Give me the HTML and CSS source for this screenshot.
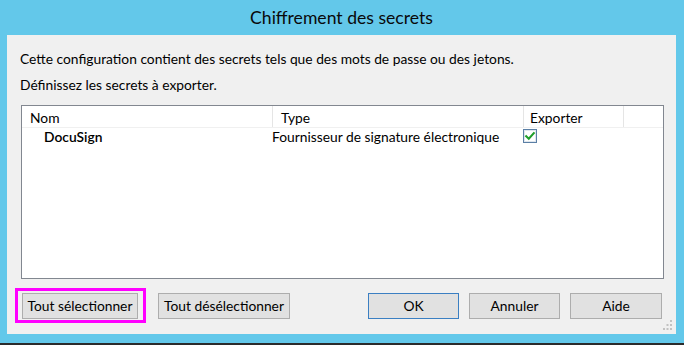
FILE: index.html
```html
<!DOCTYPE html>
<html lang="fr">
<head>
<meta charset="utf-8">
<title>Chiffrement des secrets</title>
<link rel="stylesheet" href="styles.css">
</head>
<body>
<div class="screen">
  <div class="window">
    <div class="titlebar">Chiffrement des secrets</div>
    <div class="panel">
      <p class="intro">Cette configuration contient des secrets tels que des mots de passe ou des jetons.</p>
      <p class="intro second">Définissez les secrets à exporter.</p>
      <div class="listview">
        <div class="lv-header">
          <div class="col col-name">Nom</div>
          <div class="col col-type">Type</div>
          <div class="col col-export">Exporter</div>
          <div class="col col-fill"></div>
        </div>
        <div class="lv-row">
          <div class="cell cell-name">DocuSign</div>
          <div class="cell cell-type">Fournisseur de signature électronique</div>
          <div class="cell cell-export">
            <svg class="checkbox" width="14" height="14" viewBox="0 0 14 14">
              <rect x="0.5" y="0.5" width="13" height="13" fill="#ffffff" stroke="#5b7fa5"/>
              <rect x="1.5" y="1.5" width="11" height="11" fill="none" stroke="#dfe6ee"/>
              <path d="M3.2 7.2 L5.8 9.8 L10.8 4.2" fill="none" stroke="#1f9e2a" stroke-width="2.1" stroke-linecap="square"/>
            </svg>
          </div>
        </div>
      </div>
      <div class="buttons">
        <div class="btn-group left">
          <span class="marked">
            <button class="btn wide1">Tout sélectionner</button>
            <span class="highlight"></span>
          </span>
          <button class="btn wide2">Tout désélectionner</button>
        </div>
        <div class="btn-group right">
          <button class="btn std default">OK</button>
          <button class="btn std">Annuler</button>
          <button class="btn std last">Aide</button>
        </div>
      </div>
      <svg class="grip" width="10" height="11" viewBox="0 0 10 11">
        <rect x="7" y="0" width="2" height="2" fill="#c2c2c2"/>
        <rect x="3.5" y="4" width="2" height="2" fill="#c2c2c2"/>
        <rect x="7" y="4" width="2" height="2" fill="#c2c2c2"/>
        <rect x="0" y="8" width="2" height="2" fill="#c2c2c2"/>
        <rect x="3.5" y="8" width="2" height="2" fill="#c2c2c2"/>
        <rect x="7" y="8" width="2" height="2" fill="#c2c2c2"/>
      </svg>
    </div>
  </div>
  <div class="taskline"></div>
</div>
</body>
</html>
```
FILE: styles.css
```css
* { box-sizing: border-box; }

html, body {
  margin: 0;
  padding: 0;
  background: #2b2b2b;
}

body {
  font-family: "Lato", "Noto Sans", sans-serif;
  font-size: 13.8px;
  color: #000000;
}

.screen {
  width: 684px;
  height: 345px;
  overflow: hidden;
}

.window {
  height: 343px;
  background: #63c8ea;
  padding: 0 8px 9px 7px;
}

.titlebar {
  height: 35px;
  line-height: 35px;
  text-align: center;
  font-size: 17.6px;
  color: #0a0a0a;
}

.panel {
  position: relative;
  width: 669px;
  height: 299px;
  background: #f0f0f0;
  padding: 16px 12px 15px 14px;
}

.intro {
  margin: 0 0 0 -1px;
  height: 16px;
  line-height: 16px;
  white-space: nowrap;
}

.intro.second {
  margin-top: 10px;
}

.listview {
  margin-top: 12px;
  width: 643px;
  height: 174px;
  border: 1px solid #828790;
  background: #ffffff;
}

.lv-header {
  display: flex;
  height: 22px;
  border-bottom: 1px solid #f0f0f0;
}

.col {
  height: 21px;
  padding-top: 2px;
  line-height: 19px;
  border-right: 1px solid #e5e5e5;
  white-space: nowrap;
}

.col-name { width: 251px; padding-left: 8px; }
.col-type { width: 251px; padding-left: 8px; }
.col-export { width: 100px; padding-left: 6px; }
.col-fill { flex: 1; border-right: none; }

.lv-row {
  display: flex;
  height: 18px;
  line-height: 18px;
}

.cell { white-space: nowrap; }
.cell-name { width: 250px; padding-left: 22px; font-weight: 600; }
.cell-type { width: 251px; }
.cell-export { width: 100px; padding-top: 1px; }

.checkbox { display: block; }

.buttons {
  margin-top: 14px;
  display: flex;
  justify-content: space-between;
  padding: 0 2px 0 1px;
}

.btn-group {
  display: flex;
  gap: 20px;
}

.btn-group.right { gap: 10px; }

.btn {
  height: 26px;
  margin: 0;
  padding: 0;
  font-family: "Lato", "Noto Sans", sans-serif;
  font-size: 13.8px;
  line-height: 24px;
  color: #000000;
  background: #e1e1e1;
  border: 1px solid #adadad;
  border-radius: 0;
  text-align: center;
}

.btn.wide1 { width: 116px; display: block; }
.btn.wide2 { width: 132px; }
.btn.std { width: 91px; }
.btn.std.last { width: 92px; }
.btn.default { border-color: #3b7fc2; }

.marked {
  position: relative;
  display: block;
}

.highlight {
  position: absolute;
  left: -7px;
  top: -5px;
  width: 131px;
  height: 35px;
  border: 3px solid #ff00ff;
  pointer-events: none;
}

.grip {
  position: absolute;
  right: 3px;
  bottom: 3px;
}

.taskline {
  height: 2px;
  background: #2b2b2b;
}
```
